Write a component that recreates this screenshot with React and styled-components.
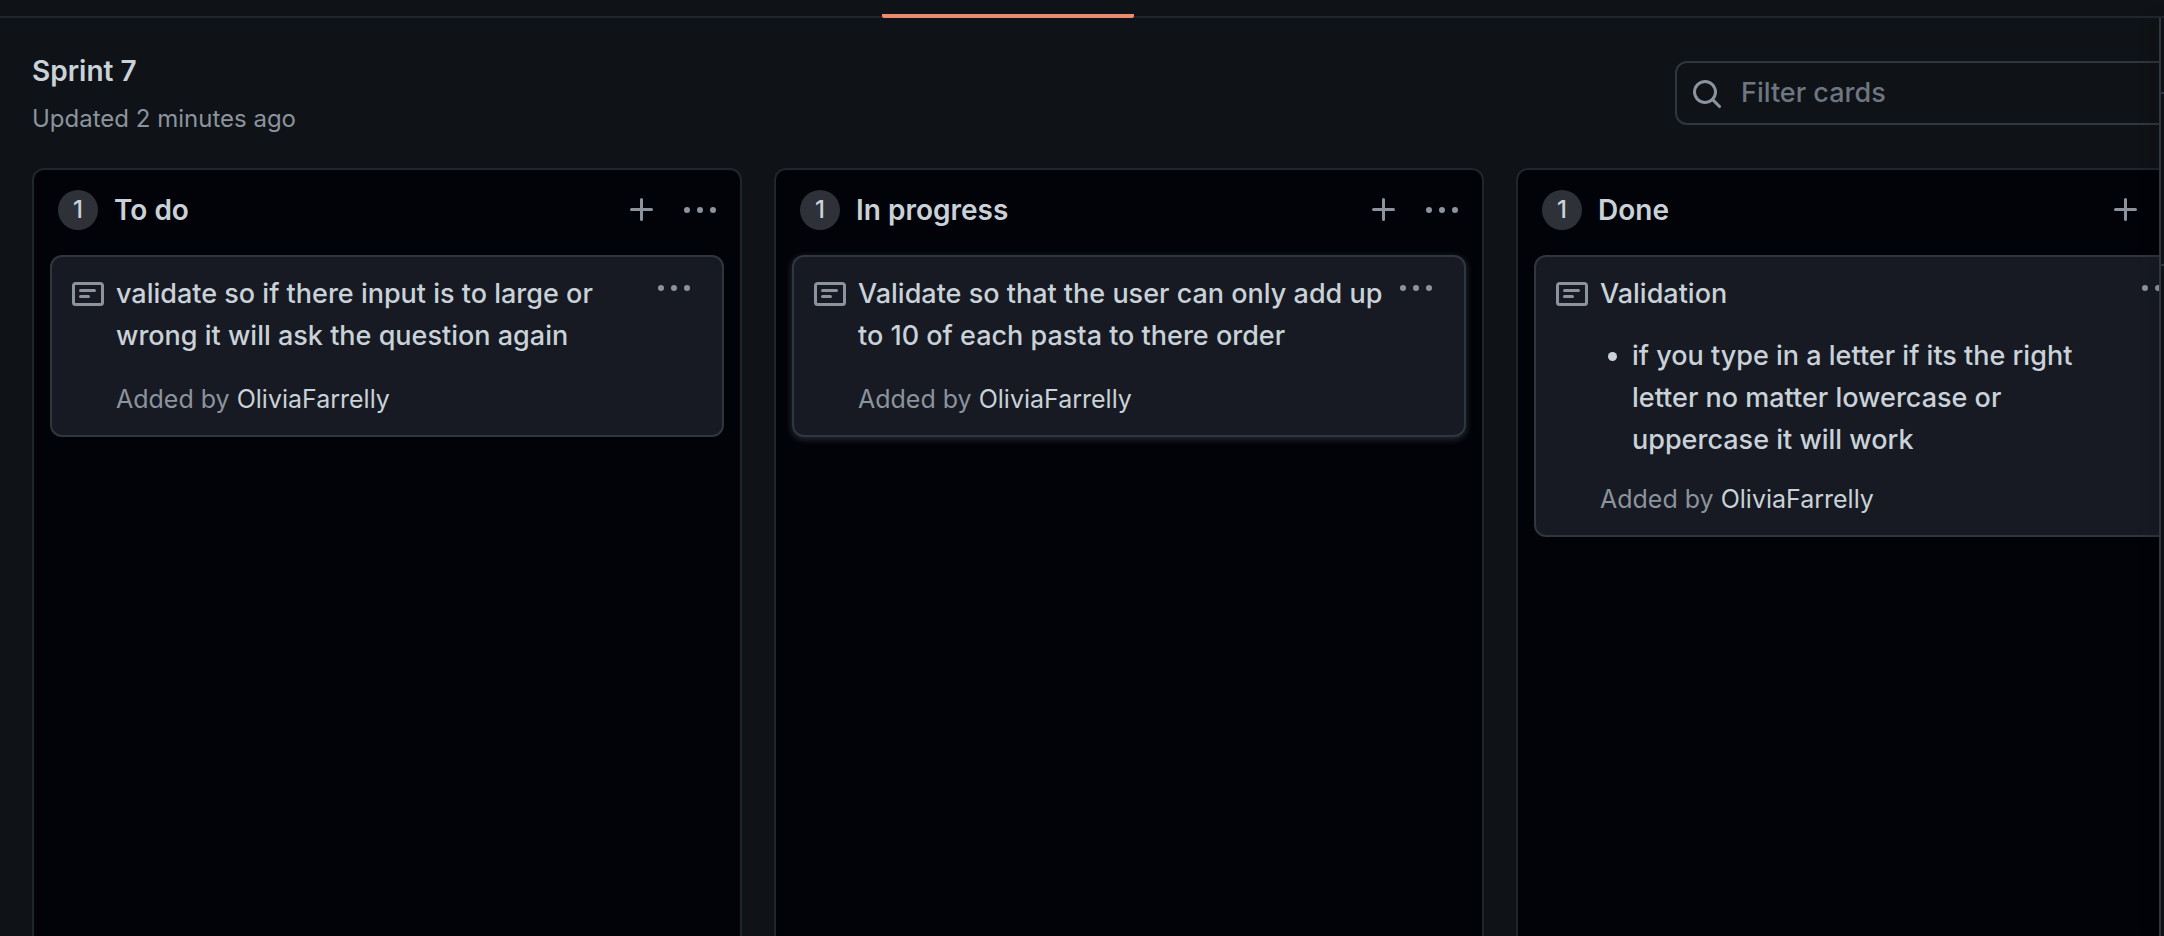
import React from "react";
import styled, { createGlobalStyle } from "styled-components";

const Global = createGlobalStyle`
  *, *::before, *::after { box-sizing: border-box; }
  body {
    margin: 0;
    background: #0f1216;
    color: #c9d1d9;
    font-family: Inter, "Liberation Sans", sans-serif;
    font-size: 27px;
    font-weight: 450;
    line-height: 42px;
  }
`;

const Page = styled.div`
  display: flex;
  flex-direction: column;
  height: 100vh;
  overflow: hidden;
`;

const TabBar = styled.nav`
  display: flex;
  justify-content: center;
  flex: none;
  height: 18px;
  border-bottom: 2px solid #21262d;
  padding-right: 148px;
`;

const ActiveTab = styled.a`
  width: 252px;
  height: 18px;
  border-bottom: 4px solid #ea8a70;
  border-radius: 2px;
`;

const Workspace = styled.div`
  display: flex;
  flex: 1;
  min-height: 0;
`;

const Project = styled.main`
  display: flex;
  flex-direction: column;
  flex: 1;
  min-width: 0;
  overflow: hidden;
`;

const Header = styled.header`
  display: flex;
  justify-content: space-between;
  align-items: flex-start;
  flex: none;
  height: 150px;
  padding: 32px 0 0 32px;
`;

const Title = styled.h1`
  margin: 0;
  font-size: 28px;
  line-height: 42px;
  font-weight: 600;
`;

const Updated = styled.p`
  margin: 8px 0 0;
  color: #8b949e;
  font-size: 24px;
  font-weight: 400;
  line-height: 38px;
`;

const Search = styled.label`
  display: flex;
  align-items: center;
  flex: none;
  gap: 18px;
  width: 600px;
  height: 64px;
  margin: 11px -116px 0 0;
  padding: 0 14px;
  border: 2px solid #30363d;
  border-radius: 12px;
`;

const SearchMark = styled.span`
  display: flex;
  padding-top: 2px;
  color: #8b949e;
`;

const SearchInput = styled.input`
  flex: 1;
  min-width: 0;
  padding: 0;
  border: 0;
  outline: 0;
  background: none;
  color: #c9d1d9;
  font: inherit;
  &::placeholder { color: #6e7681; opacity: 1; }
`;

const Board = styled.div`
  display: flex;
  flex: 1;
  min-height: 0;
  gap: 32px;
  padding-left: 32px;
`;

const Column = styled.section`
  flex: none;
  width: 710px;
  padding: 0 16px;
  border: 2px solid #21262d;
  border-bottom: 0;
  border-radius: 12px 12px 0 0;
  background: #010308;
`;

const ColumnHeader = styled.div`
  display: flex;
  align-items: center;
  height: 85px;
  padding: 0 8px 6px 8px;
`;

const Counter = styled.span`
  width: 40px;
  height: 40px;
  margin-right: 16px;
  border-radius: 20px;
  background: #2e3138;
  font-size: 24px;
  line-height: 40px;
  font-weight: 500;
  text-align: center;
`;

const ColumnTitle = styled.h2`
  flex: 1;
  margin: 0;
  font-size: 28px;
  line-height: 42px;
  font-weight: 600;
`;

const IconButton = styled.button`
  display: flex;
  padding: 0;
  border: 0;
  background: none;
  color: #8b949e;
  cursor: pointer;
`;

const Actions = styled.div`
  display: flex;
  align-items: center;
  gap: 26px;
`;

const Card = styled.article`
  display: flex;
  align-items: flex-start;
  padding: 16px 32px 16px 20px;
  border: 2px solid #30363d;
  border-radius: 12px;
  background: #171a22;
  box-shadow: ${(p) => (p.$raised ? "0 2px 6px 1px rgba(110, 118, 129, 0.3)" : "none")};
`;

const NoteMark = styled.span`
  display: flex;
  flex: none;
  width: 44px;
  padding-top: 5px;
  color: #8b949e;
`;

const CardBody = styled.div`
  flex: 1;
  min-width: 0;
  margin-right: 12px;
`;

const Note = styled.p`
  margin: 0;
`;

const NoteList = styled.ul`
  margin: 20px 0 0;
  padding-left: 32px;
`;

const Byline = styled.p`
  margin: ${(p) => (p.$tight ? "18px" : "22px")} 0 0;
  color: #8b949e;
  font-size: 25px;
  font-weight: 400;
  line-height: 40px;
`;

const Author = styled.a`
  color: #c9d1d9;
  text-decoration: none;
`;

const SidePanel = styled.aside`
  position: relative;
  flex: none;
  width: 5px;
  border-left: 2px solid #30363d;
  background: #0f1216;
  box-shadow: -4px 0 16px rgba(1, 4, 9, 0.3);
`;

const PanelHeader = styled.div`
  height: 76px;
  border-bottom: 2px solid #30363d;
`;

const PanelSection = styled.div`
  height: 172px;
  border-bottom: 2px solid #30363d;
`;

const KebabIcon = () => (
  <svg width="32" height="30" viewBox="0 0 32 30" fill="currentColor" aria-hidden="true">
    <circle cx="3" cy="15" r="3" />
    <circle cx="16" cy="15" r="3" />
    <circle cx="29" cy="15" r="3" />
  </svg>
);

const PlusIcon = () => (
  <svg width="32" height="32" viewBox="0 0 16 16" fill="currentColor" aria-hidden="true">
    <path d="M7.75 2a.75.75 0 01.75.75V7h4.25a.75.75 0 110 1.5H8.5v4.25a.75.75 0 11-1.5 0V8.5H2.75a.75.75 0 010-1.5H7V2.75A.75.75 0 017.75 2z" />
  </svg>
);

const SearchIcon = () => (
  <svg width="32" height="32" viewBox="0 0 16 16" fill="currentColor" aria-hidden="true">
    <path fillRule="evenodd" d="M11.5 7a4.499 4.499 0 11-8.998 0A4.499 4.499 0 0111.5 7zm-.82 4.74a6 6 0 111.06-1.06l3.04 3.04a.75.75 0 11-1.06 1.06l-3.04-3.04z" />
  </svg>
);

const NoteIcon = () => (
  <svg width="32" height="32" viewBox="0 0 16 16" fill="currentColor" aria-hidden="true">
    <path fillRule="evenodd" d="M0 3.75C0 2.784.784 2 1.75 2h12.5c.966 0 1.75.784 1.75 1.75v8.5A1.75 1.75 0 0114.25 14H1.75A1.75 1.75 0 010 12.25v-8.5zm1.75-.25a.25.25 0 00-.25.25v8.5c0 .138.112.25.25.25h12.5a.25.25 0 00.25-.25v-8.5a.25.25 0 00-.25-.25H1.75zM3.5 6.25a.75.75 0 01.75-.75h7a.75.75 0 010 1.5h-7a.75.75 0 01-.75-.75zm.75 2.25a.75.75 0 000 1.5h4a.75.75 0 000-1.5h-4z" />
  </svg>
);

const columns = [
  { title: "To do", text: "validate so if there input is to large or wrong it will ask the question again" },
  { title: "In progress", text: "Validate so that the user can only add up to 10 of each pasta to there order", raised: true },
  {
    title: "Done",
    text: "Validation",
    items: ["if you type in a letter if its the right letter no matter lowercase or uppercase it will work"],
  },
];

function BoardColumn({ title, text, items, raised }) {
  return (
    <Column>
      <ColumnHeader>
        <Counter>1</Counter>
        <ColumnTitle>{title}</ColumnTitle>
        <Actions>
          <IconButton aria-label={`Add a note to ${title}`}><PlusIcon /></IconButton>
          <IconButton aria-label={`${title} menu`}><KebabIcon /></IconButton>
        </Actions>
      </ColumnHeader>
      <Card $raised={raised}>
        <NoteMark><NoteIcon /></NoteMark>
        <CardBody>
          <Note>{text}</Note>
          {items && <NoteList>{items.map((item) => <li key={item}>{item}</li>)}</NoteList>}
          <Byline $tight={Boolean(items)}>Added by <Author href="#olivia">OliviaFarrelly</Author></Byline>
        </CardBody>
        <IconButton aria-label="Card menu"><KebabIcon /></IconButton>
      </Card>
    </Column>
  );
}

export default function App() {
  return (
    <>
      <Global />
      <Page>
        <TabBar aria-label="Repository">
          <ActiveTab href="#projects" aria-label="Projects" aria-current="page" />
        </TabBar>
        <Workspace>
          <Project>
            <Header>
              <div>
                <Title>Sprint 7</Title>
                <Updated>Updated 2 minutes ago</Updated>
              </div>
              <Search>
                <SearchMark><SearchIcon /></SearchMark>
                <SearchInput type="text" placeholder="Filter cards" aria-label="Filter cards" />
              </Search>
            </Header>
            <Board>
              {columns.map((column) => <BoardColumn key={column.title} {...column} />)}
            </Board>
          </Project>
          <SidePanel aria-label="Project menu">
            <PanelHeader />
            <PanelSection />
          </SidePanel>
        </Workspace>
      </Page>
    </>
  );
}
